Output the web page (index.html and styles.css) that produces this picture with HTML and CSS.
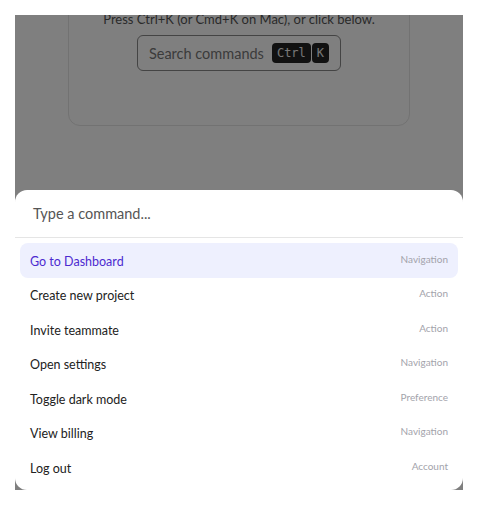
FILE: index.html
```html
<!DOCTYPE html>
<html lang="en">
<head>
    <meta charset="UTF-8">
    <meta name="viewport" content="width=device-width, initial-scale=1.0">
    <title>Command Palette</title>
    <link rel="stylesheet" href="styles.css">
</head>
<body>
    <div class="frame">
        <div class="page">
            <div class="card">
                <p class="hint">Press Ctrl+K (or Cmd+K on Mac), or click below.</p>
                <button class="open-btn">Search commands <span class="keys"><kbd>Ctrl</kbd><kbd>K</kbd></span></button>
            </div>
        </div>

        <!-- Palette overlay -->
        <div class="overlay">
            <div class="palette">
                <div class="palette-input">Type a command...</div>
                <div class="palette-list">
                    <div class="cmd active"><span class="cmd-name">Go to Dashboard</span><span class="cmd-tag">Navigation</span></div>
                    <div class="cmd"><span class="cmd-name">Create new project</span><span class="cmd-tag">Action</span></div>
                    <div class="cmd"><span class="cmd-name">Invite teammate</span><span class="cmd-tag">Action</span></div>
                    <div class="cmd"><span class="cmd-name">Open settings</span><span class="cmd-tag">Navigation</span></div>
                    <div class="cmd"><span class="cmd-name">Toggle dark mode</span><span class="cmd-tag">Preference</span></div>
                    <div class="cmd"><span class="cmd-name">View billing</span><span class="cmd-tag">Navigation</span></div>
                    <div class="cmd"><span class="cmd-name">Log out</span><span class="cmd-tag">Account</span></div>
                </div>
            </div>
        </div>
    </div>
</body>
</html>
```

FILE: styles.css
```css
* {
    box-sizing: border-box;
}
body {
    margin: 0;
    padding: 15px;
    background-color: #fff;
    font-family: Lato, "Noto Sans", Arial, sans-serif;
}
.frame {
    position: relative;
    height: 475px;
    overflow: hidden;
    background-color: #fff;
}
.page {
    display: flex;
    justify-content: center;
}
.card {
    width: 342px;
    margin-top: -31px;
    padding: 25px 16px 54px;
    border: 1px solid #e4e4e4;
    border-radius: 12px;
    text-align: center;
}
.hint {
    margin: 0 0 7px;
    font-size: 13px;
    line-height: 18px;
    color: #555;
}
.open-btn {
    display: inline-flex;
    align-items: center;
    gap: 8px;
    height: 36px;
    padding: 0 11px;
    background: #fff;
    border: 1px solid #888;
    border-radius: 6px;
    font-family: inherit;
    font-size: 14.5px;
    color: #777;
}
.keys {
    display: inline-flex;
    gap: 1px;
}
kbd {
    display: inline-block;
    height: 20px;
    padding: 0 5px;
    line-height: 20px;
    background-color: #222;
    color: #eee;
    border-radius: 4px;
    font-family: "DejaVu Sans Mono", monospace;
    font-size: 12px;
}
.overlay {
    position: absolute;
    inset: 0;
    display: flex;
    align-items: flex-end;
    background-color: rgba(0,0,0,0.5);
}
.palette {
    width: 100%;
    height: 300px;
    background-color: #fff;
    border-radius: 12px;
    overflow: hidden;
}
.palette-input {
    height: 48px;
    padding: 0 18px;
    display: flex;
    align-items: center;
    font-size: 14.5px;
    color: #555;
    border-bottom: 1px solid #e5e5e5;
}
.palette-list {
    padding: 5px;
}
.cmd {
    height: 34.5px;
    display: flex;
    align-items: center;
    justify-content: space-between;
    padding: 0 10px;
    border-radius: 8px;
    font-size: 12.5px;
    color: #222;
}
.cmd-name {
    margin-top: 2px;
}
.cmd.active {
    background-color: #eef0fe;
    color: #4c2ad0;
}
.cmd-tag {
    font-size: 10px;
    color: #a3a3ab;
    margin-top: -3px;
}
```
